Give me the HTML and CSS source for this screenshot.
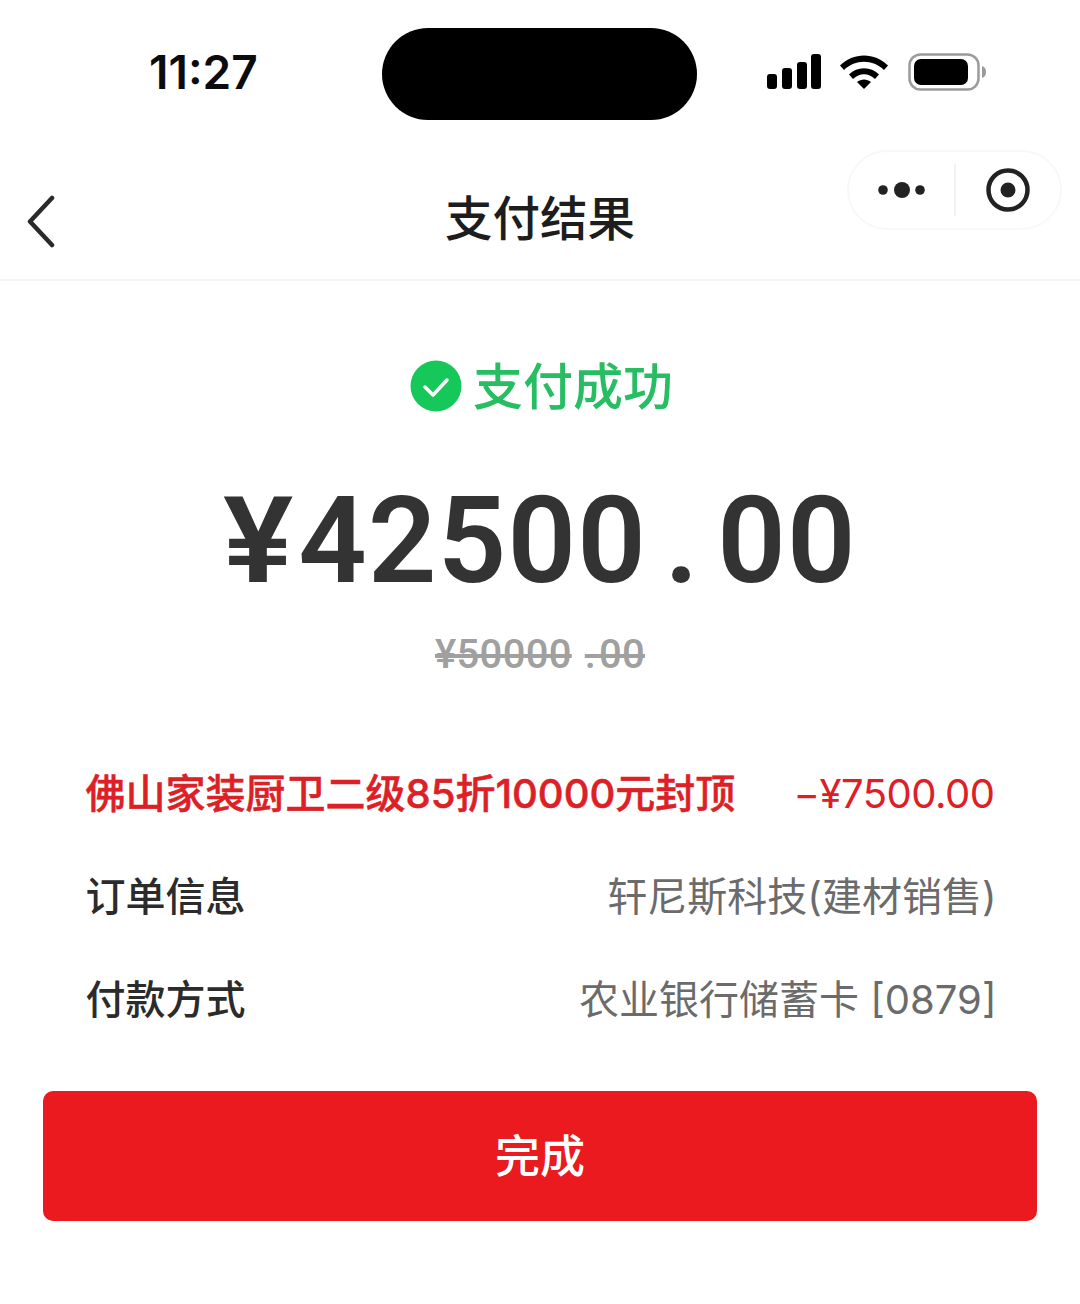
FILE: index.html
```html
<!DOCTYPE html>
<html lang="zh-CN">
<head>
<meta charset="utf-8">
<title>支付结果</title>
<link rel="stylesheet" href="styles.css">
</head>
<body>
<div class="page">
  <header class="status">
    <span class="time">11:27</span>
    <div class="island"></div>
    <div class="status-icons">
      <svg class="signal" width="56" height="36" viewBox="0 0 56 36"><rect x="1" y="20" width="10" height="15" rx="3"/><rect x="16" y="14" width="10" height="21" rx="3"/><rect x="31" y="8" width="10" height="27" rx="3"/><rect x="45" y="0" width="10" height="35" rx="3"/></svg>
      <svg class="wifi" width="50" height="36" viewBox="0 0 50 36"><path d="M1 11.500C14 -2 36 -2 49 11.500L45 16C34 5 16 5 5 16Z"/><path d="M10 20.500C18 12 32 12 40 20.500L36 25C29.500 18.500 20.500 18.500 14 25Z"/><path d="M18 28C22 24.500 28 24.500 32 28L25 35Z"/></svg>
      <svg class="battery" width="80" height="38" viewBox="0 0 80 38"><rect x="1.500" y="1.500" width="69" height="35" rx="11" fill="#fff" stroke="#9b9b9b" stroke-width="2.500"/><rect x="6" y="6" width="54" height="26" rx="7" fill="#000"/><path d="M74 13C77 14 78 16 78 19C78 22 77 24 74 25Z" fill="#9b9b9b"/></svg>
    </div>
  </header>

  <nav class="nav">
    <svg class="back" width="30" height="54" viewBox="0 0 30 54"><path d="M25 3L3 26.500L25 50"/></svg>
    <h1 class="nav-title">支付结果</h1>
    <div class="capsule">
      <svg width="48" height="16" viewBox="0 0 48 16"><circle cx="5" cy="8" r="4.800"/><circle cx="24" cy="8" r="8"/><circle cx="42" cy="8" r="4.800"/></svg>
      <span class="capsule-line"></span>
      <svg width="44" height="44" viewBox="0 0 44 44"><circle cx="22" cy="22" r="19.500" fill="none" stroke="#222" stroke-width="4.500"/><circle cx="22" cy="22" r="7.500"/></svg>
    </div>
  </nav>

  <main class="result">
    <div class="success">
      <svg class="check" width="52" height="52" viewBox="0 0 52 52"><circle cx="26" cy="26" r="25.500" fill="#16c85a"/><path d="M15 27L23 35L37 20" fill="none" stroke="#fff" stroke-width="3.500" stroke-linecap="round" stroke-linejoin="round"/></svg>
      <span class="success-text">支付成功</span>
    </div>
    <div class="amount"><span class="yen">¥</span>42500<span class="dot">.</span>00</div>
    <div class="original">¥50000<span class="dot-small">.</span>00</div>

    <dl class="details">
      <div class="row promo"><dt>佛山家装厨卫二级85折10000元封顶</dt><dd>−¥7500.00</dd></div>
      <div class="row"><dt>订单信息</dt><dd>轩尼斯科技(建材销售)</dd></div>
      <div class="row"><dt>付款方式</dt><dd>农业银行储蓄卡 [0879]</dd></div>
    </dl>

    <button class="done" type="button">完成</button>
  </main>
</div>
</body>
</html>
```

FILE: styles.css
```css
* { box-sizing: border-box; }
html, body { margin: 0; padding: 0; background: #fff; }
body { font-family: Inter, "Noto Sans CJK SC", "Liberation Sans", sans-serif; color: #222; }
.page { width: 1080px; height: 1304px; overflow: hidden; background: #fff; }

.status { height: 142px; padding: 28px 0 0 149px; display: flex; align-items: flex-start; }
.time { width: 233px; margin-top: 15px; font: 600 46px/58px Inter, "Liberation Sans", sans-serif; color: #0c0c0c; }
.island { width: 315px; height: 92px; border-radius: 46px; background: #000; }
.status-icons { display: flex; align-items: center; margin: 25px 0 0 69px; height: 38px; }
.signal { fill: #000; margin-right: 17px; }
.wifi { fill: #000; margin-right: 19px; }

.nav { height: 139px; border-bottom: 2px solid #f4f4f4; display: flex; align-items: flex-start; position: relative; }
.back { position: absolute; left: 27px; top: 53px; fill: none; stroke: #2a2a2a; stroke-width: 4.500; stroke-linecap: round; stroke-linejoin: round; }
.nav-title { margin: 42px 0 0; width: 100%; text-align: center; font-size: 47.500px; line-height: 70px; font-weight: 500; color: #1d1d1d; }
.capsule { position: absolute; left: 847px; top: 8px; width: 215px; height: 80px; border: 2px solid #f8f8f8; border-radius: 40px; background: #fff; display: flex; align-items: center; padding-left: 29px; fill: #222; }
.capsule-line { width: 2px; height: 52px; background: #f2f2f2; margin: 0 30px 0 28px; }

.result { display: flex; flex-direction: column; align-items: center; }
.success { display: flex; align-items: center; gap: 11px; margin-top: 71px; height: 70px; }
.check { margin-left: 3px; margin-top: -3px; }
.success-text { font-size: 50px; line-height: 70px; font-weight: 500; color: #27bd63; }
.amount { margin-top: 55px; font: 600 120px/128px Roboto, "Liberation Sans", sans-serif; color: #333; letter-spacing: 1.200px; white-space: nowrap; }
.yen { display: inline-block; width: 75px; transform: scaleX(1.1); transform-origin: left center; }
.dot { display: inline-block; width: 70px; text-align: center; }
.original { margin-top: 25px; font: 500 40px/50px Roboto, "Liberation Sans", sans-serif; color: #a0a0a0; text-decoration: line-through; white-space: nowrap; letter-spacing: 0.300px; }
.dot-small { padding-left: 13px; letter-spacing: 3px; }

.details { width: 909px; margin: 62px 0 0; }
.row { display: flex; justify-content: space-between; align-items: center; height: 103px; }
.row dt { font-size: 40px; font-weight: 500; color: #2b2b2b; line-height: 60px; }
.row dd { margin: 0 -2px 0 0; font-size: 40px; font-weight: 400; color: #6b6b6b; line-height: 60px; }
.promo dt { color: #dc2026; -webkit-text-stroke: 0.500px #dc2026; }
.row.promo dd { color: #dc2026; margin-right: 0; letter-spacing: -0.500px; }

.done { width: 994px; height: 130px; margin-top: 40px; padding: 0 0 6px; border: 0; border-radius: 10px; background: #ea1a1e; color: #fff; font-family: inherit; font-size: 45px; font-weight: 500; }
```
